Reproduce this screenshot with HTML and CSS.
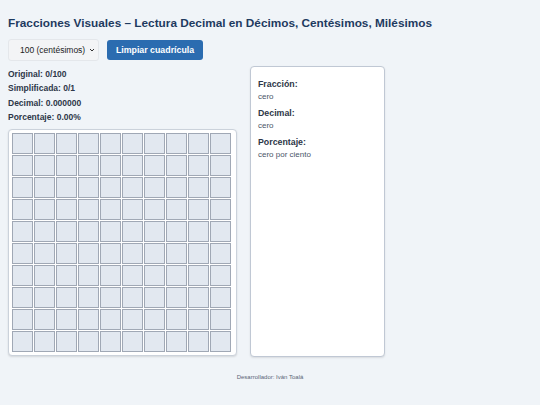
FILE: index.html
```html
<!DOCTYPE html>
<html lang="es">
<head>
<meta charset="utf-8">
<link rel="stylesheet" href="styles.css">
</head>
<body>
<h1 class="title">Fracciones Visuales – Lectura Decimal en Décimos, Centésimos, Milésimos</h1>
<div class="controls">
  <div class="selwrap">
    <select class="sel"><option>100 (centésimos)</option></select>
    <svg class="chev" width="6" height="4" viewBox="0 0 6 4"><path d="M1 1 L3 3 L5 1" fill="none" stroke="#333" stroke-width="1"/></svg>
  </div>
  <button class="btn">Limpiar cuadrícula</button>
</div>
<div class="main">
  <div class="left">
    <div class="info">
      <div>Original: 0/100</div>
      <div>Simplificada: 0/1</div>
      <div>Decimal: 0.000000</div>
      <div>Porcentaje: 0.00%</div>
    </div>
    <div class="gridbox">
      <div class="grid" id="grid"></div>
    </div>
  </div>
  <div class="panel">
    <div class="lbl">Fracción:</div>
    <div class="val">cero</div>
    <div class="lbl">Decimal:</div>
    <div class="val">cero</div>
    <div class="lbl">Porcentaje:</div>
    <div class="val">cero por ciento</div>
  </div>
</div>
<footer class="foot">Desarrollador: Iván Toalá</footer>
<script>
var g=document.getElementById('grid');
for(var i=0;i<100;i++){var c=document.createElement('div');c.className='cell';g.appendChild(c);}
</script>
</body>
</html>
```
FILE: styles.css
```css
html, body { margin: 0; padding: 0; }
body {
  background: #f0f4f8;
  font-family: "Liberation Sans", Arial, sans-serif;
  color: #2d3748;
  padding: 8px;
}
.title {
  margin: 7px 0 8px 0;
  font-size: 11.8px;
  font-weight: bold;
  color: #1e3a5f;
  line-height: 16px;
}
.controls {
  display: flex;
  align-items: center;
  gap: 8px;
}
.selwrap {
  position: relative;
  width: 91px;
  height: 22px;
}
.sel {
  -webkit-appearance: none;
  appearance: none;
  width: 91px;
  height: 22px;
  font-family: "Liberation Sans", Arial, sans-serif;
  font-size: 8.5px;
  background: #f3f4f6;
  border: 1px solid #e4e7eb;
  border-radius: 3px;
  color: #222;
  padding: 0 0 0 11px;
}
.chev {
  position: absolute;
  right: 4px;
  top: 9px;
  pointer-events: none;
}
.btn {
  height: 20px;
  width: 96px;
  padding: 0;
  background: #2b6cb0;
  color: #fff;
  border: none;
  border-radius: 3px;
  font-family: "Liberation Sans", Arial, sans-serif;
  font-size: 8.8px;
  font-weight: bold;
}
.main {
  display: flex;
  align-items: flex-start;
  gap: 13px;
  margin-top: 5px;
}
.left { width: 229px; }
.info {
  font-size: 8.5px;
  font-weight: bold;
  line-height: 14.4px;
  color: #2d3748;
  padding-top: 1px;
}
.gridbox {
  margin-top: 4px;
  background: #fff;
  border: 1px solid #cbd2db;
  border-radius: 4px;
  box-shadow: 0 1px 2px rgba(0,0,0,0.12);
  padding: 3px;
  width: 221px;
}
.grid {
  display: grid;
  grid-template-columns: repeat(10, 21px);
  grid-auto-rows: 21px;
  gap: 1px;
}
.cell {
  background: #e2e8f0;
  border: 1px solid #a0a8b5;
  box-sizing: border-box;
}
.panel {
  background: #fff;
  border: 1px solid #c0c8d4;
  border-radius: 4px;
  box-shadow: 0 1px 2px rgba(0,0,0,0.1);
  padding: 11px 7px 9px 7px;
  width: 119px;
  height: 269px;
}
.lbl {
  font-size: 8.8px;
  font-weight: bold;
  color: #2d3748;
  line-height: 13px;
}
.val {
  font-size: 8px;
  color: #4a5568;
  line-height: 12px;
  margin-bottom: 4px;
}
.foot {
  text-align: center;
  font-size: 6px;
  color: #5a6577;
  margin-top: 17px;
}
```
